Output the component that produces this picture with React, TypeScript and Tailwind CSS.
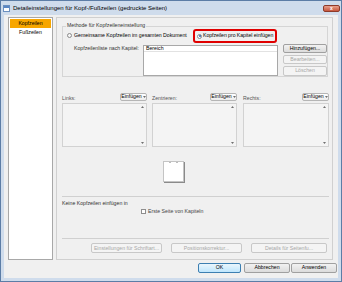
// Detaileinstellungen für Kopf-/Fußzeilen — Win7-style dialog
import type { ReactNode } from "react";

const ff = "font-['Liberation_Sans',Arial,sans-serif]";

function Btn({
  children,
  w,
  disabled,
  primary,
  className = "",
}: {
  children: ReactNode;
  w: string;
  disabled?: boolean;
  primary?: boolean;
  className?: string;
}) {
  const base =
    "flex items-center justify-center rounded-[2px] border text-[5.2px] leading-none whitespace-nowrap";
  const look = disabled
    ? "border-[#c8c8c8] bg-[#f4f4f4] text-[#a8a8a8]"
    : primary
      ? "border-[#3c7fb1] bg-gradient-to-b from-[#eaf6fd] to-[#bee6fd] text-black"
      : "border-[#a0a0a0] bg-gradient-to-b from-[#f2f2f2] to-[#dcdcdc] text-black";
  return <div className={`${base} ${look} ${w} ${className}`}>{children}</div>;
}

function Tri({ up }: { up?: boolean }) {
  return (
    <svg width="3" height="2" viewBox="0 0 3 2">
      <path d={up ? "M0 2 L1.5 0 L3 2 Z" : "M0 0 L3 0 L1.5 2 Z"} fill="#707070" />
    </svg>
  );
}

function Column({ label, w }: { label: string; w: string }) {
  return (
    <div className={`flex flex-col ${w}`}>
      <div className="flex h-[8px] items-center justify-between">
        <span className="pt-[3px] text-[5.2px] text-[#555]">{label}</span>
        <Btn w="w-[27px] h-[8px]" className="gap-[1px] border-[#b5b5b5] from-white to-[#ececec]">
          Einfügen
          <Tri />
        </Btn>
      </div>
      <div className="mt-[2px] flex h-[44px] flex-col items-end justify-between border border-[#d2d2d2] bg-[#f4f4f4] px-[2px] py-[2px]">
        <Tri up />
        <Tri />
      </div>
    </div>
  );
}

export default function App() {
  return (
    <div className={`${ff} flex h-[282px] w-[342px] flex-col border border-[#5c7da6] bg-[#cfdcec]`}>
      {/* Title bar */}
      <div className="flex h-[14px] items-center">
        <div className="ml-[2px] flex h-[7px] w-[7px] flex-col border border-[#6a8fbf] bg-white">
          <div className="h-[2px] bg-[#5a87c4]" />
        </div>
        <span className="ml-[3px] text-[6px] text-black">
          Detaileinstellungen für Kopf-/Fußzeilen (gedruckte Seiten)
        </span>
        <div className="ml-auto mr-[1px] flex h-[7px] w-[17px] items-center justify-center rounded-[2px] border border-[#8d3a2a] bg-gradient-to-b from-[#e8a08c] to-[#c6553c]">
          <span className="text-[5px] font-bold leading-none text-white">x</span>
        </div>
      </div>

      {/* Client area */}
      <div className="mx-[3px] flex h-[263px] flex-col bg-[#f0f0f0]">
        <div className="mt-[2px] flex">
          {/* Left list */}
          <div className="ml-[4px] flex h-[243px] w-[45px] flex-col border border-[#a8a8a8] bg-white pt-[1px] text-[5.2px]">
            <div className="mx-[1px] flex h-[9px] items-center justify-center bg-[#f7a600] text-black">
              Kopfzeilen
            </div>
            <div className="mx-[1px] flex h-[9px] items-center justify-center text-black">Fußzeilen</div>
          </div>

          {/* Right panel */}
          <div className="ml-[3px] flex h-[243px] w-[277px] flex-col border border-[#d0d0d0] text-[5.2px] text-black">
            {/* Group box */}
            <div className="relative ml-[5px] mt-[8px] flex h-[51px] w-[266px] flex-col border border-[#d5d5d5]">
              <span className="absolute -top-[4px] left-[3px] bg-[#f0f0f0] px-[1px] leading-none text-[#333]">
                Methode für Kopfzeileneinstellung
              </span>
              <div className="mt-[2px] flex h-[14px] items-center">
                <div className="ml-[4px] flex w-[126px] items-center gap-[2px] whitespace-nowrap">
                  <div className="h-[5px] w-[5px] rounded-full border border-[#8a8a8a] bg-[#f6f6f6]" />
                  <span>Gemeinsame Kopfzeilen im gesamten Dokument</span>
                </div>
                <div className="flex h-[14px] w-[84px] items-center gap-[1px] whitespace-nowrap rounded-[3px] border-2 border-[#e00000] pl-[2px]">
                  <div className="flex h-[5px] w-[5px] shrink-0 items-center justify-center rounded-full border border-[#8a8a8a] bg-white">
                    <div className="h-[2px] w-[2px] rounded-full bg-[#2a5fa8]" />
                  </div>
                  <span className="tracking-[-0.05px]">Kopfzeilen pro Kapitel einfügen</span>
                </div>
              </div>
              <div className="mt-[1px] flex">
                <span className="ml-[11px] w-[69px] pt-[2px] leading-none text-[#333]">Kopfzeilenliste nach Kapitel:</span>
                <div className="mt-[1px] flex h-[31px] w-[135px] flex-col border border-[#a8a8a8] bg-white">
                  <div className="flex h-[6px] items-center border-b border-[#e2e2e2] pl-[2px] leading-none">Bereich</div>
                </div>
                <div className="ml-[5px] flex w-[44px] flex-col gap-[2px]">
                  <Btn w="w-[44px] h-[9px]">Hinzufügen...</Btn>
                  <Btn w="w-[44px] h-[9px]" disabled>
                    Bearbeiten...
                  </Btn>
                  <Btn w="w-[44px] h-[10px]" disabled>
                    Löschen
                  </Btn>
                </div>
              </div>
            </div>

            {/* Three columns */}
            <div className="ml-[5px] mt-[16px] flex">
              <Column label="Links:" w="w-[85px]" />
              <Column label="Zentrieren:" w="ml-[5px] w-[85px]" />
              <Column label="Rechts:" w="ml-[6px] w-[86px]" />
            </div>

            {/* Preview page */}
            <div className="ml-[106px] mt-[14px] flex h-[21px] w-[21px] justify-center gap-[5px] border border-[#c4c4c4] bg-white shadow-[1px_1px_0_#8a8a8a]">
              <div className="h-[1px] w-[2px] bg-[#bcbcbc]" />
              <div className="h-[1px] w-[2px] bg-[#bcbcbc]" />
            </div>

            <div className="ml-[5px] mt-[14px] h-[1px] w-[267px] bg-[#d0d0d0]" />
            <span className="ml-[5px] mt-[4px] leading-none text-[#333]">Keine Kopfzeilen einfügen in</span>
            <div className="ml-[84px] mt-[3px] flex items-center gap-[2px]">
              <div className="h-[5px] w-[5px] border border-[#8e8e8e] bg-white" />
              <span className="leading-none text-[#444]">Erste Seite von Kapiteln</span>
            </div>

            <div className="ml-[5px] mt-[24px] h-[1px] w-[267px] bg-[#d0d0d0]" />
            <div className="ml-[34px] mt-[4px] flex">
              <Btn w="w-[71px] h-[10px]" disabled>
                Einstellungen für Schriftart...
              </Btn>
              <Btn w="ml-[9px] w-[71px] h-[10px]" disabled>
                Positionskorrektur...
              </Btn>
              <Btn w="ml-[9px] w-[76px] h-[10px]" disabled>
                Details für Seitenfu...
              </Btn>
            </div>
          </div>
        </div>

        {/* Dialog buttons */}
        <div className="mt-[3px] flex justify-end pr-[1px]">
          <Btn w="w-[43px] h-[10px]" primary>
            OK
          </Btn>
          <Btn w="ml-[3px] w-[46px] h-[10px]">Abbrechen</Btn>
          <Btn w="ml-[1px] w-[46px] h-[10px]">Anwenden</Btn>
        </div>
      </div>
    </div>
  );
}
